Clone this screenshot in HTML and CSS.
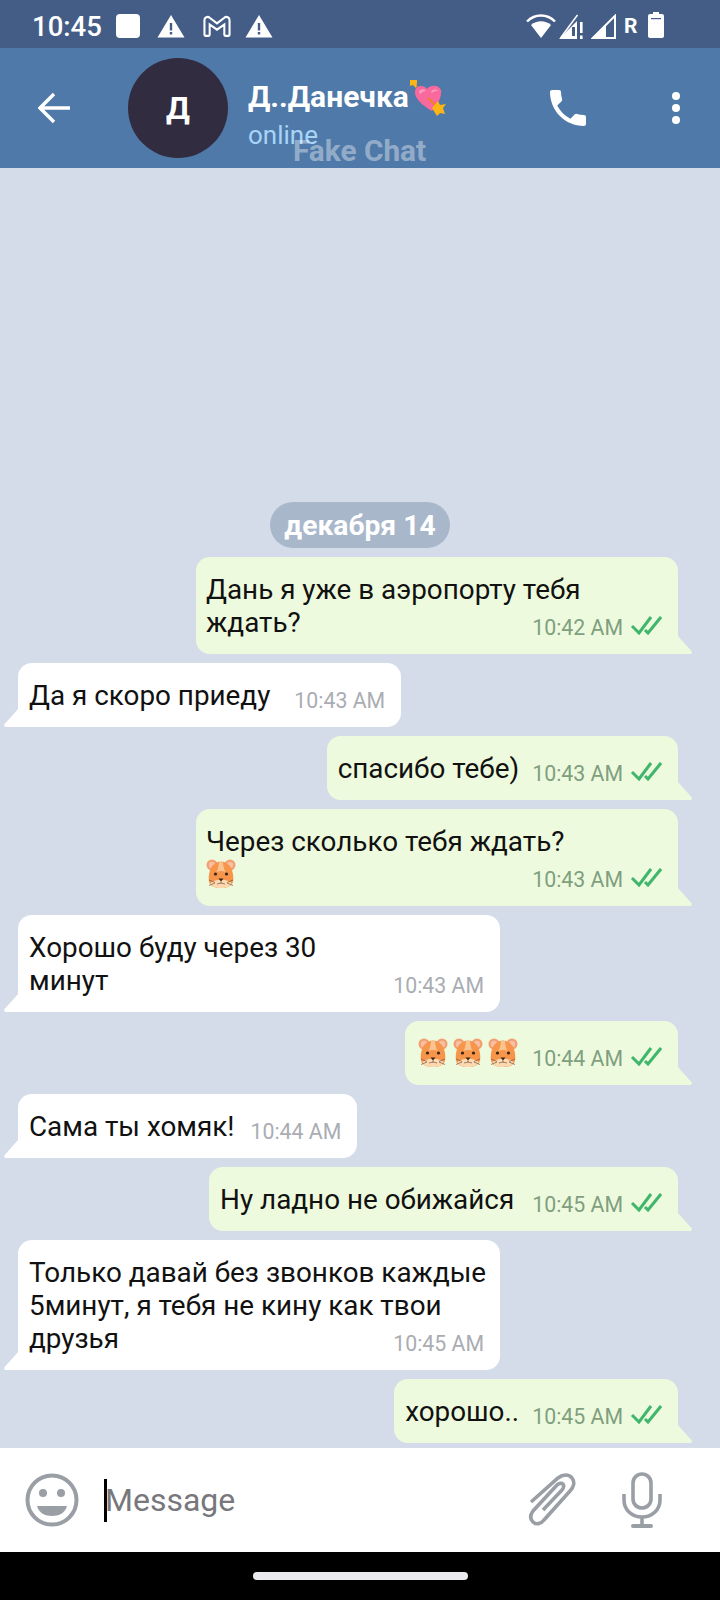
FILE: index.html
```html
<!DOCTYPE html>
<html>
<head>
    <title>Чат</title>
    <link rel="stylesheet" href="styles.css">
</head>
<body>
    <svg class="defs" width="0" height="0">
        <symbol id="hamster" viewBox="0 0 30 30">
            <circle cx="6" cy="6" r="5.500" fill="#f3a06f"/>
            <circle cx="24" cy="6" r="5.500" fill="#f3a06f"/>
            <circle cx="6" cy="6" r="3.200" fill="#f8bfa6"/>
            <circle cx="24" cy="6" r="3.200" fill="#f8bfa6"/>
            <path d="M15 2.500c6.500 0 11 5.500 12 13 .9 7 .5 13.500-12 13.500S2.100 22.500 3 15.500c1-7.500 5.500-13 12-13z" fill="#f7954a"/>
            <path d="M13 3h4c.3 4 .9 7 2.500 10-3-1.500-6-1.500-9 0C12.100 10 12.700 7 13 3z" fill="#fbc48f"/>
            <path d="M4.500 24.500c3-5 18-5 21 0-1 3-5 4.500-10.500 4.500S5.500 27.500 4.500 24.500z" fill="#fcd9b0"/>
            <circle cx="9.500" cy="15" r="1.600" fill="#33241c"/>
            <circle cx="20.500" cy="15" r="1.600" fill="#33241c"/>
            <path d="M12.500 19.500h5L15 22.500z" fill="#33241c"/>
            <path d="M15 22.500v2M11 25l4-1 4 1M3 21l6 2.500M3 26.500l6-2.500M27 21l-6 2.500M27 26.500l-6-2.500" stroke="#7a5640" stroke-width=".7" fill="none"/>
        </symbol>
        <symbol id="ticks" viewBox="0 0 32 20">
            <path d="M2 11l7 7L21 2" stroke="#3fb66b" stroke-width="3" fill="none"/>
            <path d="M15 15l3 3L31 2" stroke="#3fb66b" stroke-width="3" fill="none"/>
        </symbol>
    </svg>

    <div class="app">
        <div class="status-bar">
            <span class="clock">10:45</span>
            <div class="status-left">
                <span class="square"></span>
                <svg class="warn" viewBox="0 0 28 24"><path d="M14 1L27.500 23.500H.5z" fill="#fff"/><path d="M12.800 9h2.400v7.500h-2.400zM12.800 18h2.400v2.500h-2.400z" fill="#445d86"/></svg>
                <svg class="gmail" viewBox="0 0 28 22"><path d="M2 19V5a3 3 0 0 1 5-2.400L14 8l7-5.400a3 3 0 0 1 5 2.400v14a1 1 0 0 1-1 1h-3a1 1 0 0 1-1-1V9l-7 5-7-5v10a1 1 0 0 1-1 1H3a1 1 0 0 1-1-1z" fill="none" stroke="#fff" stroke-width="2"/></svg>
                <svg class="warn" viewBox="0 0 28 24"><path d="M14 1L27.500 23.500H.5z" fill="#fff"/><path d="M12.800 9h2.400v7.500h-2.400zM12.800 18h2.400v2.500h-2.400z" fill="#445d86"/></svg>
            </div>
            <div class="status-right">
                <svg class="wifi" viewBox="0 0 30 24"><path d="M1 7.500C9-.5 21-.5 29 7.500" fill="none" stroke="#fff" stroke-width="2.400"/><path d="M5 11c6-5 14-5 20 0L15 24z" fill="#fff"/></svg>
                <svg class="signal" viewBox="0 0 25 25"><path d="M0 25L18 7v18z" fill="#fff"/><path d="M18.500 1L1.500 24" stroke="#fff" stroke-width="1.500"/><path d="M21 8h2.600v11H21zM21 21.500h2.600V25H21z" fill="#fff"/><path d="M13 13h3v9h-3z" fill="#445d86"/></svg>
                <svg class="signal" viewBox="0 0 25 25"><path d="M1.800 24L24 1.800V24z" fill="none" stroke="#fff" stroke-width="2"/><path d="M0 25L15 10v15z" fill="#fff"/></svg>
                <span class="roam">R</span>
                <svg class="battery" viewBox="0 0 16 26"><path d="M5 0h6v2h3a2 2 0 0 1 2 2v20a2 2 0 0 1-2 2H2a2 2 0 0 1-2-2V4a2 2 0 0 1 2-2h3z" fill="#fff"/><path d="M3 6h10v1.200H3z" fill="#445d86"/></svg>
            </div>
        </div>

        <div class="toolbar">
            <svg class="back" viewBox="0 0 32 32"><path d="M32 16H2M16 2L2 16l14 14" fill="none" stroke="#fff" stroke-width="3.400"/></svg>
            <div class="avatar">Д</div>
            <div class="title">
                <div class="name">Д..Данечка<svg class="heart" viewBox="0 0 38 38">
                    <path d="M24 33C14 27 6 20 7 13c1-5 8-7 12-2 4-5 12-4 14 1 1 7-3 14-9 21z" fill="#f9699d"/>
                    <path d="M11 14c1-3 5-4 7-1-2 0-4 1-6 3zM23 14c2-3 5-3 7-1-2 0-4 0-6 2z" fill="#fb9dbd"/>
                    <path d="M6 6l3 3M20 20l9 9" stroke="#f0801f" stroke-width="2"/>
                    <path d="M2 2h7v3l-1 5-3-3-3 1zM24 30l6-7 2 4 6-1-3 4 2 6-5-1-3 3z" fill="#fdb515"/>
                </svg></div>
                <div class="online">online</div>
            </div>
            <svg class="phone" viewBox="3 3 18 18"><path d="M6.620 10.790c1.440 2.830 3.760 5.140 6.590 6.590l2.200-2.200c.27-.27.67-.36 1.020-.24 1.120.37 2.330.57 3.570.57.55 0 1 .45 1 1V20c0 .55-.45 1-1 1-9.390 0-17-7.610-17-17 0-.55.45-1 1-1h3.500c.55 0 1 .45 1 1 0 1.250.2 2.450.57 3.570.11.35.03.74-.25 1.020l-2.200 2.200z" fill="#fff"/></svg>
            <div class="dots"><i></i><i></i><i></i></div>
            <span class="watermark">Fake Chat</span>
        </div>

        <div class="chat">
            <div class="date">декабря 14</div>

            <div class="bubble out wide">
                <div class="text">Дань я уже в аэропорту тебя<br>ждать?</div>
                <div class="meta"><span>10:42 AM</span><svg class="tick"><use href="#ticks"/></svg></div>
            </div>
            <div class="bubble in line far">
                <div class="text">Да я скоро приеду</div>
                <div class="meta"><span>10:43 AM</span></div>
            </div>
            <div class="bubble out line">
                <div class="text">спасибо тебе)</div>
                <div class="meta"><span>10:43 AM</span><svg class="tick"><use href="#ticks"/></svg></div>
            </div>
            <div class="bubble out wide">
                <div class="text">Через сколько тебя ждать?<br><svg class="emoji"><use href="#hamster"/></svg></div>
                <div class="meta"><span>10:43 AM</span><svg class="tick"><use href="#ticks"/></svg></div>
            </div>
            <div class="bubble in wide">
                <div class="text">Хорошо буду через 30<br>минут</div>
                <div class="meta"><span>10:43 AM</span></div>
            </div>
            <div class="bubble out line near">
                <div class="text emojis"><svg class="emoji"><use href="#hamster"/></svg><svg class="emoji"><use href="#hamster"/></svg><svg class="emoji"><use href="#hamster"/></svg></div>
                <div class="meta"><span>10:44 AM</span><svg class="tick"><use href="#ticks"/></svg></div>
            </div>
            <div class="bubble in line mid">
                <div class="text">Сама ты хомяк!</div>
                <div class="meta"><span>10:44 AM</span></div>
            </div>
            <div class="bubble out line loose">
                <div class="text">Ну ладно не обижайся</div>
                <div class="meta"><span>10:45 AM</span><svg class="tick"><use href="#ticks"/></svg></div>
            </div>
            <div class="bubble in wide">
                <div class="text">Только давай без звонков каждые<br>5минут, я тебя не кину как твои<br>друзья</div>
                <div class="meta"><span>10:45 AM</span></div>
            </div>
            <div class="bubble out line">
                <div class="text">хорошо..</div>
                <div class="meta"><span>10:45 AM</span><svg class="tick"><use href="#ticks"/></svg></div>
            </div>
        </div>

        <div class="composer">
            <svg class="smile" viewBox="0 0 54 54"><circle cx="27" cy="27" r="24.500" fill="none" stroke="#9a9ea5" stroke-width="4"/><circle cx="18" cy="20" r="4" fill="#9a9ea5"/><circle cx="36" cy="20" r="4" fill="#9a9ea5"/><path d="M12 33h30c-2 7-8 10-15 10s-13-3-15-10z" fill="#9a9ea5"/></svg>
            <span class="caret"></span>
            <span class="placeholder">Message</span>
            <svg class="clip" viewBox="0 0 48 54"><path d="M3 29L30 5c5-4 11-4 14 0s2 9-2 13L16 47c-3 4-8 5-11 2s-3-7 0-11l24-26c2-2 5-2 6-1s1 4-1 6L15 37" fill="none" stroke="#9a9ea5" stroke-width="3.600"/></svg>
            <svg class="mic" viewBox="0 0 40 56"><rect x="11" y="2" width="18" height="34" rx="9" fill="none" stroke="#9a9ea5" stroke-width="3.600"/><path d="M2 22v6c0 10 8 17 18 17s18-7 18-17v-6M20 45v8" fill="none" stroke="#9a9ea5" stroke-width="3.600"/><rect x="9" y="52" width="22" height="4" rx="2" fill="#9a9ea5"/></svg>
        </div>

        <div class="nav-bar"><span class="home"></span></div>
    </div>
</body>
</html>
```

FILE: styles.css
```css
* {
    box-sizing: border-box;
}
body {
    margin: 0;
    font-family: Roboto, "Noto Sans", sans-serif;
    background-color: #d5dce9;
}
.defs {
    position: absolute;
}
.app {
    width: 720px;
    height: 1600px;
    display: flex;
    flex-direction: column;
    overflow: hidden;
}

/* status bar */
.status-bar {
    height: 48px;
    flex: none;
    display: flex;
    align-items: center;
    padding: 4px 56px 0 32px;
    background-color: #445d86;
    color: #fff;
}
.clock {
    font-size: 27.5px;
    font-weight: 500;
    width: 84px;
}
.status-left {
    display: flex;
    align-items: center;
    gap: 17px;
}
.square {
    width: 24px;
    height: 24px;
    border-radius: 4px;
    background-color: #fff;
}
.warn {
    width: 28px;
    height: 24px;
}
.gmail {
    width: 30px;
    height: 23px;
    margin-right: -4px;
}
.status-right {
    margin-left: auto;
    display: flex;
    align-items: center;
    gap: 7px;
}
.wifi {
    width: 30px;
    height: 24px;
    margin-right: -4px;
}
.signal {
    width: 25px;
    height: 25px;
}
.roam {
    font-size: 21px;
    font-weight: 700;
    width: 14px;
    margin-left: 1px;
}
.battery {
    width: 16px;
    height: 26px;
    margin-left: 3px;
    margin-top: -2px;
}

/* toolbar */
.toolbar {
    position: relative;
    height: 120px;
    flex: none;
    display: flex;
    align-items: center;
    padding-left: 38px;
    background-color: #4f79a8;
    color: #fff;
}
.back {
    width: 32px;
    height: 32px;
}
.avatar {
    width: 100px;
    height: 100px;
    margin-left: 58px;
    border-radius: 50%;
    background-color: #322c40;
    display: flex;
    align-items: center;
    justify-content: center;
    font-size: 32px;
    font-weight: 700;
}
.title {
    margin-left: 20px;
    margin-top: 12px;
    width: 302px;
}
.name {
    display: flex;
    align-items: center;
    font-size: 30px;
    font-weight: 700;
    line-height: 36px;
}
.heart {
    width: 38px;
    height: 38px;
    margin: -1px 0 -1px -1px;
}
.online {
    margin-top: 5px;
    font-size: 26px;
    line-height: 30px;
    color: #a8d4f8;
}
.phone {
    width: 36px;
    height: 36px;
}
.dots {
    margin-left: 86px;
    display: flex;
    flex-direction: column;
    gap: 4px;
}
.dots i {
    width: 8px;
    height: 8px;
    border-radius: 50%;
    background-color: #fff;
}
.watermark {
    position: absolute;
    left: 293px;
    top: 85px;
    font-size: 29.8px;
    font-weight: 700;
    line-height: 36px;
    color: rgba(255, 255, 255, 0.4);
}

/* messages */
.chat {
    flex: 1;
    min-height: 0;
    display: flex;
    flex-direction: column;
    justify-content: flex-end;
    gap: 9px;
    padding: 0 42px 5px 18px;
}
.date {
    align-self: center;
    margin-left: 24px;
    height: 46px;
    padding: 2px 14px 0;
    border-radius: 23px;
    background-color: #a9b7cb;
    color: #fff;
    font-size: 28.3px;
    font-weight: 700;
    line-height: 44px;
}
.bubble {
    position: relative;
    padding: 16px 16px 15px 11px;
    font-size: 27.85px;
    line-height: 33px;
    color: #111;
}
.text {
    white-space: nowrap;
}
.bubble.in {
    align-self: flex-start;
    background-color: #fff;
    border-radius: 14px 14px 14px 0;
}
.bubble.out {
    align-self: flex-end;
    background-color: #eefadd;
    border-radius: 14px 14px 0 14px;
}
.bubble::after {
    content: "";
    position: absolute;
    bottom: 0;
    width: 15px;
    height: 19px;
}
.bubble.in::after {
    left: -14px;
    background-color: #fff;
    clip-path: polygon(100% 0, 100% 100%, 6% 100%, 0 88%);
}
.bubble.out::after {
    right: -14px;
    background-color: #eefadd;
    clip-path: polygon(0 0, 0 100%, 94% 100%, 100% 88%);
}
.bubble.line {
    display: flex;
    gap: 13px;
}
.bubble.near {
    gap: 14px;
}
.bubble.mid {
    gap: 16px;
}
.bubble.loose {
    gap: 18px;
}
.bubble.far {
    gap: 24px;
}
.bubble.wide {
    display: grid;
    grid-template-columns: minmax(0, 1fr);
    width: 482px;
}
.bubble.out.wide {
    padding-left: 10px;
}
.bubble.wide .text,
.bubble.wide .meta {
    grid-area: 1 / 1;
}
.bubble.wide .meta {
    justify-self: end;
    align-self: end;
}
.emoji {
    display: block;
    width: 30px;
    height: 30px;
    margin: 1px 0 2px;
}
.emojis {
    display: flex;
    gap: 5px;
    margin-left: 2px;
}
.meta {
    display: flex;
    align-items: center;
    font-size: 21.3px;
    line-height: 26px;
    padding-top: 9px;
    margin-bottom: -2px;
    color: #a9adb3;
}
.out .meta {
    color: #7f9f80;
}
.tick {
    width: 32px;
    height: 20px;
    margin-left: 7px;
    margin-top: -6px;
}

/* message box */
.composer {
    height: 104px;
    flex: none;
    display: flex;
    align-items: center;
    padding-left: 25px;
    background-color: #fff;
}
.smile {
    width: 54px;
    height: 54px;
}
.caret {
    width: 3px;
    height: 43px;
    margin-left: 25px;
    background-color: #000;
}
.placeholder {
    margin-left: -2px;
    font-size: 32px;
    color: #77777c;
}
.clip {
    width: 48px;
    height: 54px;
    margin-left: auto;
}
.mic {
    width: 40px;
    height: 56px;
    margin: 0 58px 0 46px;
}
.nav-bar {
    height: 48px;
    flex: none;
    display: flex;
    align-items: center;
    justify-content: center;
    background-color: #000;
}
.home {
    width: 215px;
    height: 8px;
    border-radius: 4px;
    background-color: #ebeaed;
}
```
